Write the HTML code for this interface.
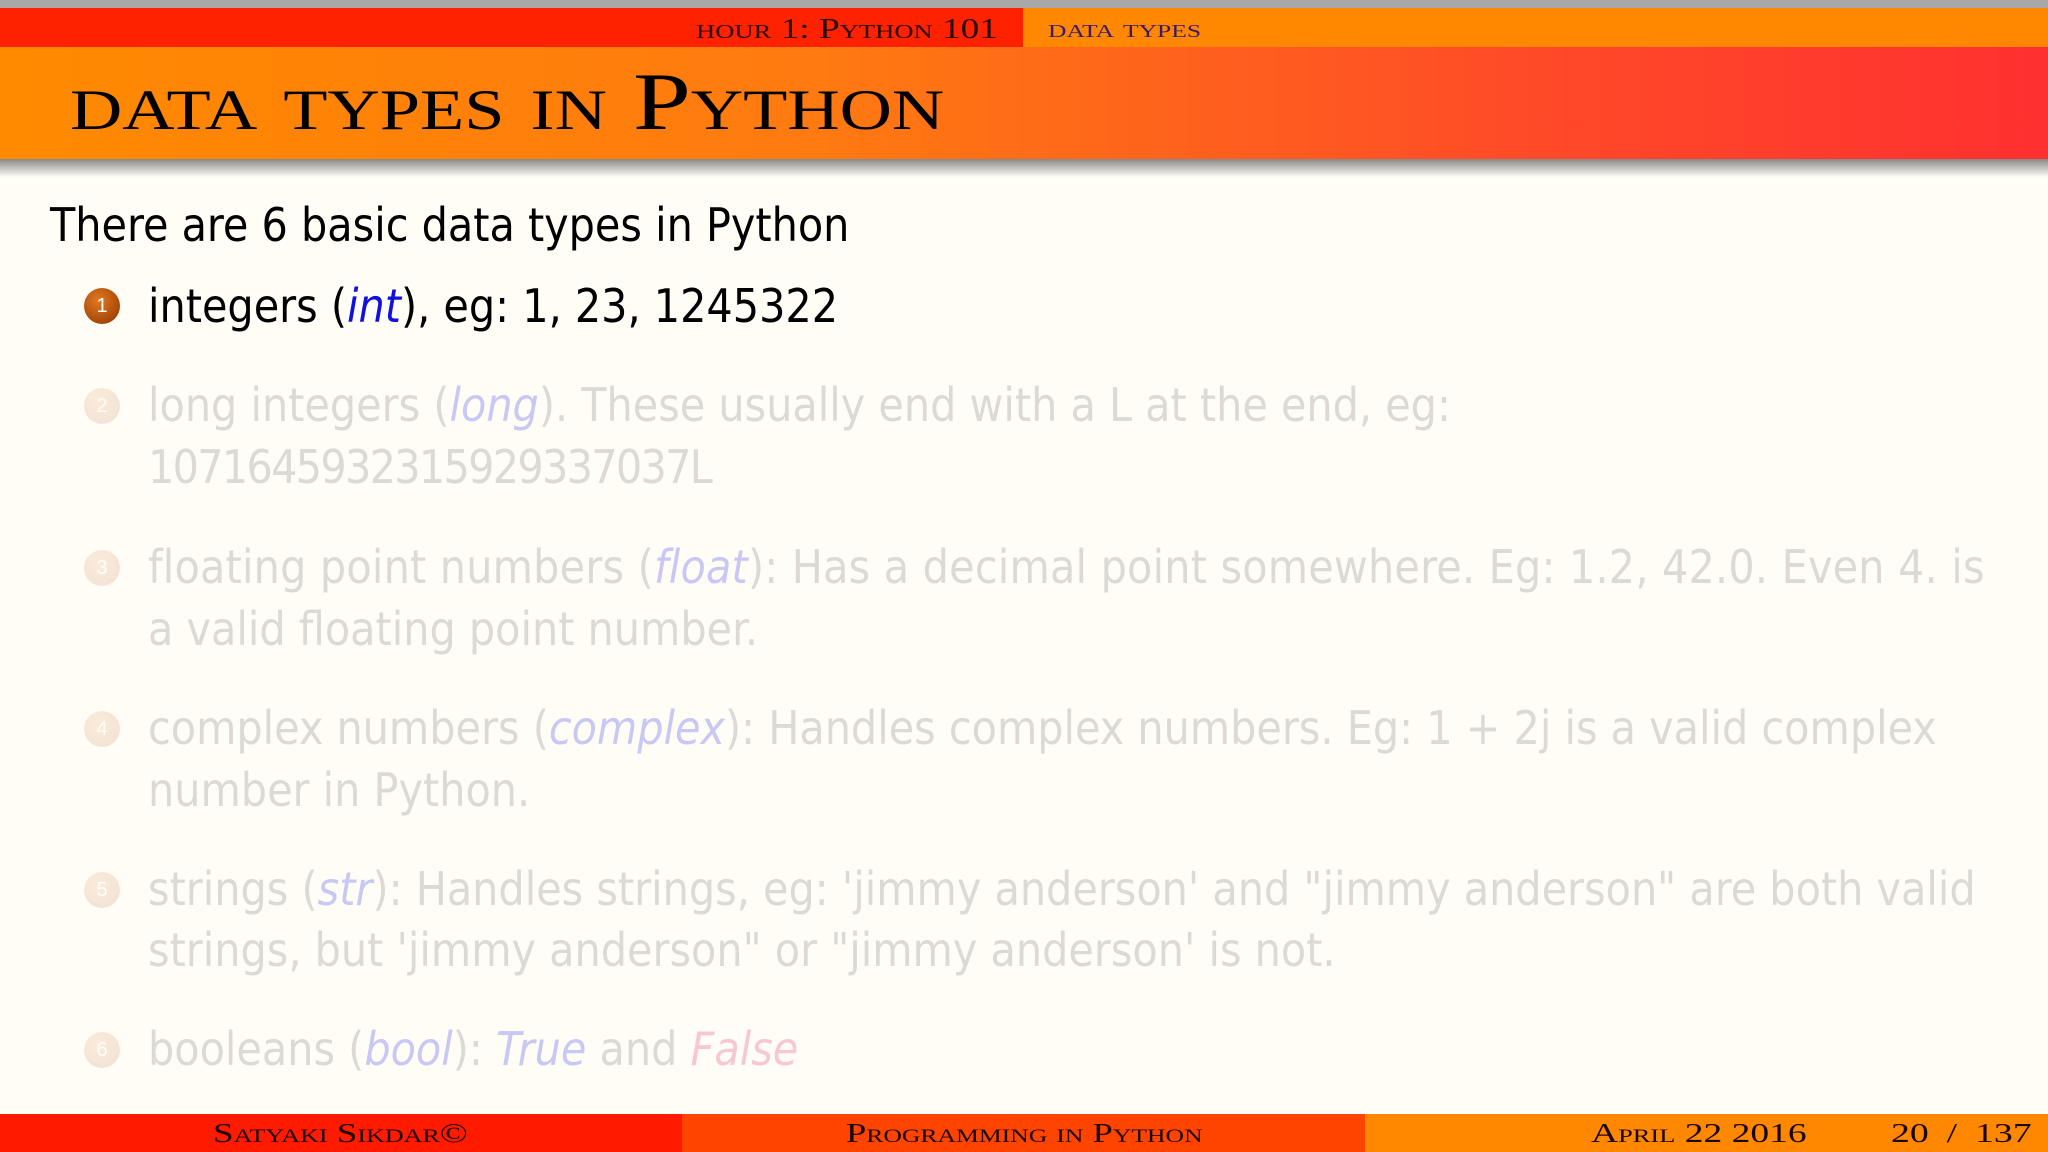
<!DOCTYPE html>
<html><head><meta charset="utf-8"><style>
html,body{margin:0;padding:0}
body{width:2048px;height:1152px;position:relative;overflow:hidden;background:#fffdf6;font-family:"Liberation Sans",sans-serif}
.abs{position:absolute;white-space:nowrap}
.serif{font-family:"Liberation Serif",serif;font-variant:small-caps}
.sans{font-family:"DejaVu Sans Condensed","Liberation Sans",sans-serif}
.sx{display:inline-block;transform-origin:left center}
.blt{position:absolute;width:36px;height:36px;border-radius:50%;background:radial-gradient(circle at 40% 35%,#e07a20,#a8480a 70%,#7a3005);color:#fff;font-size:20px;text-align:center;line-height:36px}
.fade .blt{opacity:.13}
.fade{color:#dcdad4}
.fade i{color:#c8c8f4}
</style></head><body>
<div class="abs" style="left:0;top:0;width:2048px;height:8px;background:#a8a8a8"></div>
<div class="abs" style="left:0;top:8px;width:1023px;height:39px;background:#ff2200"></div>
<div class="abs" style="left:1023px;top:8px;width:1025px;height:39px;background:#ff8800"></div>
<div class="abs serif" style="left:696px;top:8px;line-height:43px;font-size:28px;color:#2a0a00"><span class="sx" style="transform:scaleX(1.33)">hour 1: Python 101</span></div>
<div class="abs serif" style="left:1048px;top:8px;line-height:43px;font-size:25px;color:#3a1a70"><span class="sx" style="transform:scaleX(1.42)">data types</span></div>
<div class="abs" style="left:0;top:47px;width:2048px;height:112px;background:linear-gradient(90deg,#ff8a00 0%,#ff7a10 40%,#ff4a28 75%,#ff3030 100%)"></div>
<div class="abs" style="left:0;top:159px;width:2048px;height:18px;background:linear-gradient(#888,#fffdf6)"></div>
<div class="abs serif" style="left:70px;top:52px;line-height:100px;font-size:82px;color:#000"><span class="sx" style="transform:scaleX(1.27)">data types in Python</span></div>

<div class="abs sans" style="left:50px;top:198px;font-size:46px;color:#000">There are 6 basic data types in Python</div>

<div class="blt" style="left:84px;top:288px">1</div>
<div class="abs sans" style="left:148px;top:279px;font-size:46px;color:#000">integers (<i style="color:#1010e0">int</i>), eg: 1, 23, 1245322</div>

<div class="fade">
<div class="blt" style="left:84px;top:388px">2</div>
<div class="abs sans" style="left:148px;top:378px;font-size:46px">long integers (<i>long</i>). These usually end with a L at the end, eg:</div>
<div class="abs sans" style="left:148px;top:440px;font-size:46px;letter-spacing:-1.7px">107164593231592933703​7L</div>
<div class="blt" style="left:84px;top:550px">3</div>
<div class="abs sans" style="left:148px;top:540px;font-size:46px;letter-spacing:0.2px">floating point numbers (<i>float</i>): Has a decimal point somewhere. Eg: 1.2, 42.0. Even 4. is</div>
<div class="abs sans" style="left:148px;top:602px;font-size:46px">a valid floating point number.</div>
<div class="blt" style="left:84px;top:711px">4</div>
<div class="abs sans" style="left:148px;top:701px;font-size:46px">complex numbers (<i>complex</i>): Handles complex numbers. Eg: 1 + 2j is a valid complex</div>
<div class="abs sans" style="left:148px;top:763px;font-size:46px">number in Python.</div>
<div class="blt" style="left:84px;top:872px">5</div>
<div class="abs sans" style="left:148px;top:862px;font-size:46px">strings (<i>str</i>): Handles strings, eg: 'jimmy anderson' and "jimmy anderson" are both valid</div>
<div class="abs sans" style="left:148px;top:923px;font-size:46px">strings, but 'jimmy anderson" or "jimmy anderson' is not.</div>
<div class="blt" style="left:84px;top:1032px">6</div>
<div class="abs sans" style="left:148px;top:1022px;font-size:46px">booleans (<i>bool</i>): <i>True</i> and <i style="color:#f8c8d0">False</i></div>
</div>

<div class="abs" style="left:0;top:1114px;width:682px;height:38px;background:#ff1a00"></div>
<div class="abs" style="left:682px;top:1114px;width:683px;height:38px;background:#ff4400"></div>
<div class="abs" style="left:1365px;top:1114px;width:683px;height:38px;background:#ff8800"></div>
<div class="abs serif" style="left:213px;top:1114px;line-height:38px;font-size:27px;color:#1a0500"><span class="sx" style="transform:scaleX(1.37)">Satyaki Sikdar©</span></div>
<div class="abs serif" style="left:846px;top:1114px;line-height:38px;font-size:27px;color:#1a0500"><span class="sx" style="transform:scaleX(1.35)">Programming in Python</span></div>
<div class="abs serif" style="left:1591px;top:1114px;line-height:38px;font-size:27px;color:#1a0500"><span class="sx" style="transform:scaleX(1.39)">April 22 2016</span></div>
<div class="abs serif" style="left:1891px;top:1114px;line-height:38px;font-size:27px;color:#1a0500"><span class="sx" style="transform:scaleX(1.4);word-spacing:6px">20 / 137</span></div>
</body></html>
